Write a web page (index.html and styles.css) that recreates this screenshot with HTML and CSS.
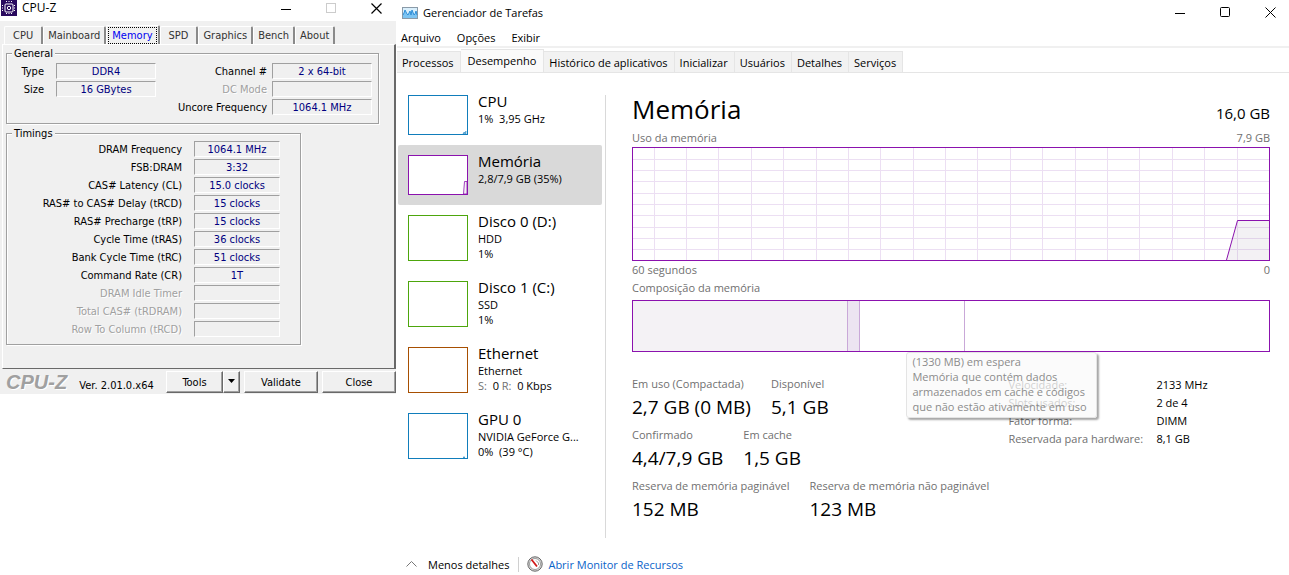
FILE: index.html
```
<!DOCTYPE html>
<html lang="pt-BR">
<head>
    <meta charset="UTF-8">
    <meta name="viewport" content="width=device-width, initial-scale=1.0">
    <title>CPU-Z / Gerenciador de Tarefas</title>
    <link rel="stylesheet" href="styles.css">
</head>
<body>
    <section class="cpuz">
        <header class="cpuz-title">
            <svg class="cpuz-icon" width="16" height="16" viewBox="0 0 16 16">
                <rect width="16" height="16" fill="#2a0a5e"/>
                <rect x="4" y="4" width="8" height="8" rx="1" fill="none" stroke="#fff"/>
                <circle cx="8" cy="8" r="1.700" fill="none" stroke="#fff"/>
                <path d="M5.500 1v2M8 1v2M10.500 1v2M5.500 13v2M8 13v2M10.500 13v2M1 5.500h2M1 8h2M1 10.500h2M13 5.500h2M13 8h2M13 10.500h2" stroke="#fff" stroke-dasharray="1 1"/>
            </svg>
            <span class="cpuz-name">CPU-Z</span>
            <div class="win-buttons cpuz-buttons">
                <button aria-label="Minimize"><svg width="11" height="11"><path d="M0 6.500h10" stroke="#000"/></svg></button>
                <button aria-label="Maximize" disabled><svg width="11" height="11"><rect x=".5" y=".5" width="9" height="9" fill="none" stroke="#ccc"/></svg></button>
                <button aria-label="Close"><svg width="11" height="11"><path d="M.5.5l10 10M10.500.5l-10 10" stroke="#000" stroke-width="1.200"/></svg></button>
            </div>
        </header>

        <div class="cpuz-body">
            <nav class="cpuz-tabs" role="tablist">
                <button class="cpuz-tab tab-wide" role="tab">CPU</button>
                <button class="cpuz-tab" role="tab">Mainboard</button>
                <button class="cpuz-tab active" role="tab" aria-selected="true"><span>Memory</span></button>
                <button class="cpuz-tab tab-wide" role="tab">SPD</button>
                <button class="cpuz-tab" role="tab">Graphics</button>
                <button class="cpuz-tab" role="tab">Bench</button>
                <button class="cpuz-tab" role="tab">About</button>
            </nav>

            <div class="cpuz-panel">
                <fieldset class="group general">
                    <legend>General</legend>
                    <div class="general-cols">
                        <div class="rows rows-left">
                            <label for="type">Type</label><input id="type" value="DDR4" readonly>
                            <label for="size">Size</label><input id="size" value="16 GBytes" readonly>
                        </div>
                        <div class="rows rows-right">
                            <label for="channel">Channel #</label><input id="channel" value="2 x 64-bit" readonly>
                            <label for="dcmode" class="off">DC Mode</label><input id="dcmode" disabled>
                            <label for="uncore">Uncore Frequency</label><input id="uncore" value="1064.1 MHz" readonly>
                        </div>
                    </div>
                </fieldset>

                <fieldset class="group timings">
                    <legend>Timings</legend>
                    <div class="rows rows-timings">
                        <label for="dram">DRAM Frequency</label><input id="dram" value="1064.1 MHz" readonly>
                        <label for="fsb">FSB:DRAM</label><input id="fsb" value="3:32" readonly>
                        <label for="cl">CAS# Latency (CL)</label><input id="cl" value="15.0 clocks" readonly>
                        <label for="trcd">RAS# to CAS# Delay (tRCD)</label><input id="trcd" value="15 clocks" readonly>
                        <label for="trp">RAS# Precharge (tRP)</label><input id="trp" value="15 clocks" readonly>
                        <label for="tras">Cycle Time (tRAS)</label><input id="tras" value="36 clocks" readonly>
                        <label for="trc">Bank Cycle Time (tRC)</label><input id="trc" value="51 clocks" readonly>
                        <label for="cr">Command Rate (CR)</label><input id="cr" value="1T" readonly>
                        <label for="idle" class="off">DRAM Idle Timer</label><input id="idle" disabled>
                        <label for="total" class="off">Total CAS# (tRDRAM)</label><input id="total" disabled>
                        <label for="row" class="off">Row To Column (tRCD)</label><input id="row" disabled>
                    </div>
                </fieldset>
            </div>

            <footer class="cpuz-footer">
                <span class="cpuz-logo">CPU-Z</span>
                <span class="cpuz-version">Ver. 2.01.0.x64</span>
                <div class="split">
                    <button class="btn">Tools</button>
                    <button class="btn btn-arrow" aria-label="Tools menu"><svg width="7" height="4"><path d="M0 0h7L3.500 4z"/></svg></button>
                </div>
                <button class="btn btn-wide">Validate</button>
                <button class="btn btn-wide">Close</button>
            </footer>
        </div>
    </section>

    <section class="taskmgr">
        <header class="tm-title">
            <svg width="16" height="12" viewBox="0 0 16 12">
                <rect x=".5" y=".5" width="15" height="11" fill="#d9effc" stroke="#8a9aa8"/>
                <path d="M1 11V8l1-2 1-3 2 4 1 1 2-4 1 4 1-5 2 5 1-1 1-3 1 4v3z" fill="#7cc4f2"/>
                <path d="M1 8l1-2 1-3 2 4 1 1 2-4 1 4 1-5 2 5 1-1 1-3 1 4" fill="none" stroke="#2f8fd8"/>
            </svg>
            <span>Gerenciador de Tarefas</span>
            <div class="win-buttons tm-buttons">
                <button aria-label="Minimizar"><svg width="11" height="11"><path d="M0 6.500h10" stroke="#000"/></svg></button>
                <button aria-label="Maximizar"><svg width="11" height="11"><rect x=".5" y=".5" width="9" height="9" rx="1" fill="none" stroke="#000"/></svg></button>
                <button aria-label="Fechar"><svg width="11" height="11"><path d="M.5.5l10 10M10.500.5l-10 10" stroke="#000"/></svg></button>
            </div>
        </header>

        <nav class="tm-menu">
            <button>Arquivo</button>
            <button>Opções</button>
            <button>Exibir</button>
        </nav>

        <nav class="tm-tabs" role="tablist">
            <button class="tm-tab" role="tab">Processos</button>
            <button class="tm-tab active" role="tab" aria-selected="true">Desempenho</button>
            <button class="tm-tab" role="tab">Histórico de aplicativos</button>
            <button class="tm-tab" role="tab">Inicializar</button>
            <button class="tm-tab" role="tab">Usuários</button>
            <button class="tm-tab" role="tab">Detalhes</button>
            <button class="tm-tab" role="tab">Serviços</button>
        </nav>

        <div class="tm-content">
            <ul class="devices">
                <li class="device">
                    <svg class="thumb cpu" viewBox="0 0 58 38"><path d="M54 38l1-2 1 1 1-2v3z" fill="#8bbfe0" stroke="#117dbb" stroke-width=".5"/></svg>
                    <div class="device-text">
                        <h3>CPU</h3>
                        <p>1%&nbsp; 3,95 GHz</p>
                    </div>
                </li>
                <li class="device selected">
                    <svg class="thumb mem" viewBox="0 0 58 38"><path d="M54.500 38l1-12.500H58V38z" fill="#f4f2f4" stroke="#8b12ae" stroke-width=".8"/></svg>
                    <div class="device-text">
                        <h3>Memória</h3>
                        <p>2,8/7,9 GB (35%)</p>
                    </div>
                </li>
                <li class="device">
                    <svg class="thumb tall disk"></svg>
                    <div class="device-text">
                        <h3>Disco 0 (D:)</h3>
                        <p>HDD</p>
                        <p>1%</p>
                    </div>
                </li>
                <li class="device">
                    <svg class="thumb tall disk"></svg>
                    <div class="device-text">
                        <h3>Disco 1 (C:)</h3>
                        <p>SSD</p>
                        <p>1%</p>
                    </div>
                </li>
                <li class="device">
                    <svg class="thumb tall net"></svg>
                    <div class="device-text">
                        <h3>Ethernet</h3>
                        <p>Ethernet</p>
                        <p><span class="dim">S:</span>&nbsp; 0 <span class="dim">R:</span>&nbsp; 0 Kbps</p>
                    </div>
                </li>
                <li class="device">
                    <svg class="thumb tall cpu" viewBox="0 0 58 44"><path d="M54 44l1-2 1 2z" fill="#117dbb"/></svg>
                    <div class="device-text">
                        <h3>GPU 0</h3>
                        <p>NVIDIA GeForce G...</p>
                        <p>0%&nbsp; (39 °C)</p>
                    </div>
                </li>
            </ul>

            <main class="memory">
                <div class="memory-head">
                    <h1>Memória</h1>
                    <span class="total">16,0 GB</span>
                </div>
                <div class="caption">
                    <span>Uso da memória</span>
                    <span>7,9 GB</span>
                </div>
                <svg class="usage" viewBox="0 0 636 112" preserveAspectRatio="none">
                    <path class="grid-lines" d="M0 11.500h636M0 22.500h636M0 33.500h636M0 45.500h636M0 56.500h636M0 67.500h636M0 79.500h636M0 90.500h636M0 101.500h636
                        M21.500 0v112M53.500 0v112M85.500 0v112M118.500 0v112M150.500 0v112M183.500 0v112M215.500 0v112M247.500 0v112M280.500 0v112M312.500 0v112M344.500 0v112M377.500 0v112M409.500 0v112M442.500 0v112M474.500 0v112M506.500 0v112M539.500 0v112M571.500 0v112M604.500 0v112"/>
                    <path class="area" d="M593.500 112L604.500 72.500H636V112z"/>
                    <path class="line" d="M593.500 112L604.500 72.500H636"/>
                </svg>
                <div class="caption">
                    <span>60 segundos</span>
                    <span>0</span>
                </div>
                <div class="caption">Composição da memória</div>
                <div class="composition">
                    <div class="seg in-use" style="width: 33.800%"></div>
                    <div class="seg modified" style="width: 1.900%"></div>
                    <div class="seg standby" style="width: 16.500%"></div>
                    <div class="tooltip" role="tooltip">(1330 MB) em espera<br>Memória que contém dados<br>armazenados em cache e códigos<br>que não estão ativamente em uso</div>
                </div>

                <div class="stats">
                    <div class="stats-left">
                        <div class="stat-row">
                            <div><h4>Em uso (Compactada)</h4><p>2,7 GB (0 MB)</p></div>
                            <div><h4>Disponível</h4><p>5,1 GB</p></div>
                        </div>
                        <div class="stat-row">
                            <div><h4>Confirmado</h4><p>4,4/7,9 GB</p></div>
                            <div><h4>Em cache</h4><p>1,5 GB</p></div>
                        </div>
                        <div class="stat-row">
                            <div><h4>Reserva de memória paginável</h4><p>152 MB</p></div>
                            <div><h4>Reserva de memória não paginável</h4><p>123 MB</p></div>
                        </div>
                    </div>
                    <dl class="hardware">
                        <dt>Velocidade:</dt><dd>2133 MHz</dd>
                        <dt>Slots usados:</dt><dd>2 de 4</dd>
                        <dt>Fator forma:</dt><dd>DIMM</dd>
                        <dt>Reservada para hardware:</dt><dd>8,1 GB</dd>
                    </dl>
                </div>
            </main>
        </div>

        <footer class="tm-footer">
            <button class="less">
                <svg width="11" height="6"><path d="M.5 5.500l5-5 5 5" fill="none" stroke="#777"/></svg>
                Menos detalhes
            </button>
            <a class="monitor" href="#">
                <svg width="16" height="16" viewBox="0 0 16 16">
                    <circle cx="8" cy="8" r="7.200" fill="#ddd" stroke="#666"/>
                    <circle cx="8" cy="8" r="5.500" fill="#fff" stroke="#888" stroke-width=".8"/>
                    <path d="M4.500 3.500l5.500 7" stroke="#d01818" stroke-width="1.800"/>
                    <path d="M9 4.500l2.500 2.500v2" fill="none" stroke="#999"/>
                </svg>
                Abrir Monitor de Recursos
            </a>
        </footer>
    </section>
</body>
</html>
```
FILE: styles.css
```
* {
    box-sizing: border-box;
}

body {
    margin: 0;
    background: #fff;
    color: #000;
    display: flex;
    align-items: flex-start;
    font-family: "Open Sans", "Segoe UI", sans-serif;
    font-size: 11px;
    line-height: 15px;
}

h1, h3, h4, p, ul, dl, dd {
    margin: 0;
    padding: 0;
    font-weight: normal;
}

button {
    border: 0;
    background: none;
    padding: 0;
    margin: 0;
    font: inherit;
    color: inherit;
    white-space: nowrap;
}

.win-buttons {
    display: flex;
    margin-left: auto;
}

.win-buttons button {
    display: flex;
    align-items: center;
    justify-content: center;
}

/* CPU-Z */
.cpuz {
    width: 396px;
    flex-shrink: 0;
    font-family: "DejaVu Sans Condensed", Tahoma, sans-serif;
    line-height: 13px;
}

.cpuz-title {
    display: flex;
    height: 21px;
    padding-left: 1px;
}

.cpuz-name {
    margin-left: 5px;
    font-family: "Open Sans", "Segoe UI", sans-serif;
    font-size: 12px;
    line-height: 16px;
}

.cpuz-buttons {
    height: 16px;
    gap: 5px;
}

.cpuz-buttons button {
    width: 40px;
}

.cpuz-body {
    background: #f0f0f0;
    padding: 4px 0 0 2px;
}

.cpuz-tabs {
    display: flex;
    align-items: flex-end;
    padding-left: 2px;
}

.cpuz-tab {
    height: 18px;
    padding: 0 4px;
    color: #333;
    border-top: 1px solid #fff;
    border-left: 1px solid #fff;
    border-right: 2px solid #8a8a8a;
    border-radius: 2px 2px 0 0;
}

.cpuz-tab.active {
    height: 19px;
    padding: 0 1px;
    color: #0000f0;
}

.cpuz-tab.active span {
    display: block;
    padding: 1px 3px;
    border: 1px dotted #000;
}

.cpuz-tab.tab-wide {
    padding: 0 8px;
}

.cpuz-panel {
    height: 325px;
    padding: 2px 15px 0 3px;
    border: 1px solid #fff;
    border-right: 2px solid #696969;
    border-bottom: 1px solid #696969;
}

.group {
    margin: 0 0 3px;
    border: 1px solid #a0a0a0;
    box-shadow: 1px 1px #fff, inset 1px 1px #fff;
}

.group legend {
    padding: 0 2px;
    margin-left: 5px;
    background: #f0f0f0;
}

.general {
    padding: 3px 6px 8px 0;
}

.timings {
    width: 295px;
    padding: 1px 20px 7px 0;
}

.general-cols {
    display: flex;
    justify-content: space-between;
    align-items: flex-start;
}

.rows {
    display: grid;
    gap: 2px 12px;
    align-items: center;
    text-align: right;
}

.rows-left {
    grid-template-columns: 37px 100px;
}

.rows-right {
    grid-template-columns: 1fr 100px;
    column-gap: 5px;
}

.rows-timings {
    grid-template-columns: 1fr 86px;
}

.rows input {
    width: 100%;
    height: 16px;
    padding: 0;
    font: inherit;
    color: #000080;
    text-align: center;
    background: #f0f0f0;
    border: 1px solid #fff;
    border-top-color: #a0a0a0;
    border-left-color: #a0a0a0;
}

.off {
    color: #a0a0a0;
    text-shadow: 1px 1px #fff;
}

.cpuz-footer {
    display: flex;
    align-items: flex-start;
    gap: 4px;
    padding-top: 2px;
}

.cpuz-logo {
    margin-left: 4px;
    font-family: "Liberation Sans", Arial, sans-serif;
    font-size: 20px;
    font-weight: bold;
    font-style: italic;
    line-height: 23px;
    color: #a0a0a0;
    text-shadow: 1px 1px #fff;
}

.cpuz-version {
    margin: 8px auto 0;
}

.split {
    display: flex;
}

.btn {
    width: 57px;
    height: 22px;
    background: #f0f0f0;
    border: 1px solid #fff;
    border-right-color: #696969;
    border-bottom-color: #696969;
    box-shadow: inset -1px -1px #a0a0a0;
}

.btn-arrow {
    width: 17px;
}

.btn-arrow svg {
    display: block;
    margin: 0 auto 2px;
}

.btn-wide {
    width: 74px;
}

/* Task manager */
.taskmgr {
    flex: 1;
    min-width: 0;
    padding-left: 1px;
}

.tm-title {
    display: flex;
    align-items: center;
    gap: 5px;
    height: 25px;
    padding-left: 5px;
}

.tm-buttons {
    gap: 7px;
}

.tm-buttons button {
    width: 38px;
    height: 25px;
}

.tm-menu {
    display: flex;
    gap: 16px;
    height: 23px;
    padding: 4px 4px 0;
    border-bottom: 2px solid #f0f0f0;
}

.tm-tabs {
    display: flex;
    align-items: flex-end;
    height: 25px;
    border-bottom: 1px solid #e5e5e5;
}

.tm-tab {
    height: 21px;
    padding: 0 6px 0 5px;
    background: #f2f2f2;
    border: 1px solid #e5e5e5;
    border-left: 0;
    border-bottom: 0;
}

.tm-tab.active {
    height: 23px;
    padding: 0 7px 2px;
    background: #fafafa;
}

.tm-content {
    display: flex;
    padding: 12px 19px 0 1px;
}

.devices {
    width: 204px;
    list-style: none;
}

.device {
    display: flex;
    gap: 10px;
    padding: 7px 10px;
    border-radius: 2px;
}

.device.selected {
    background: #d9d9d9;
}

.thumb {
    flex-shrink: 0;
    width: 60px;
    height: 40px;
    margin: 3px 0;
    background: #fff;
    border: 1px solid;
}

.thumb.tall {
    height: 46px;
}

.cpu {
    border-color: #117dbb;
}

.mem {
    border-color: #8b12ae;
}

.disk {
    border-color: #4da60c;
}

.net {
    border-color: #a74f01;
}

.device-text {
    white-space: nowrap;
}

.device-text h3 {
    font-size: 15px;
    line-height: 19px;
}

.dim {
    color: #707070;
}

.memory {
    flex: 1;
    min-width: 0;
    margin: 10px 0 0 3px;
    padding-left: 26px;
    border-left: 1px solid #d9d9d9;
    min-height: 443px;
}

.memory-head {
    display: flex;
    justify-content: space-between;
    align-items: baseline;
    padding-bottom: 6px;
}

.memory-head h1 {
    font-size: 26px;
    line-height: 28px;
}

.total {
    font-size: 15px;
}

.caption {
    display: flex;
    justify-content: space-between;
    line-height: 18px;
    color: #707070;
}

.usage {
    display: block;
    width: 100%;
    height: 114px;
    border: 1px solid #8b12ae;
}

.usage path {
    fill: none;
    vector-effect: non-scaling-stroke;
}

.usage .grid-lines {
    stroke: #ecdff3;
}

.usage .area {
    fill: rgba(100, 80, 110, 0.08);
}

.usage .line {
    stroke: #8b12ae;
}

.composition {
    position: relative;
    display: flex;
    height: 52px;
    margin-top: 3px;
    border: 1px solid #8b12ae;
}

.seg {
    border-right: 1px solid #c9a8d8;
}

.in-use {
    background: #f4f2f5;
}

.modified {
    background: #ece4f1;
}

.tooltip {
    position: absolute;
    top: 51px;
    left: 43%;
    padding: 1px 9px 3px 5px;
    color: #8c8c8c;
    white-space: nowrap;
    background: rgba(249, 249, 249, 0.7);
    border: 1px solid #e4e4e4;
    border-radius: 3px;
    box-shadow: 2px 2px 2px rgba(0, 0, 0, 0.35);
}

.stats {
    display: grid;
    grid-template-columns: 59% 1fr;
    margin-top: 24px;
}

.stat-row {
    display: flex;
    gap: 20px;
    height: 51px;
    white-space: nowrap;
}

.stat-row h4 {
    color: #707070;
}

.stat-row p {
    font-size: 19px;
    line-height: 32px;
}

.hardware {
    display: grid;
    grid-template-columns: 148px 1fr;
    align-content: start;
    line-height: 18px;
    white-space: nowrap;
}

.hardware dt {
    color: #707070;
}

.tm-footer {
    display: flex;
    align-items: center;
    margin-top: 18px;
    padding-left: 9px;
}

.less {
    display: flex;
    align-items: center;
    gap: 11px;
    padding-right: 9px;
    border-right: 1px solid #d0d0d0;
}

.monitor {
    display: flex;
    align-items: center;
    gap: 5px;
    margin-left: 8px;
    color: #0a63c9;
    text-decoration: none;
}
```
